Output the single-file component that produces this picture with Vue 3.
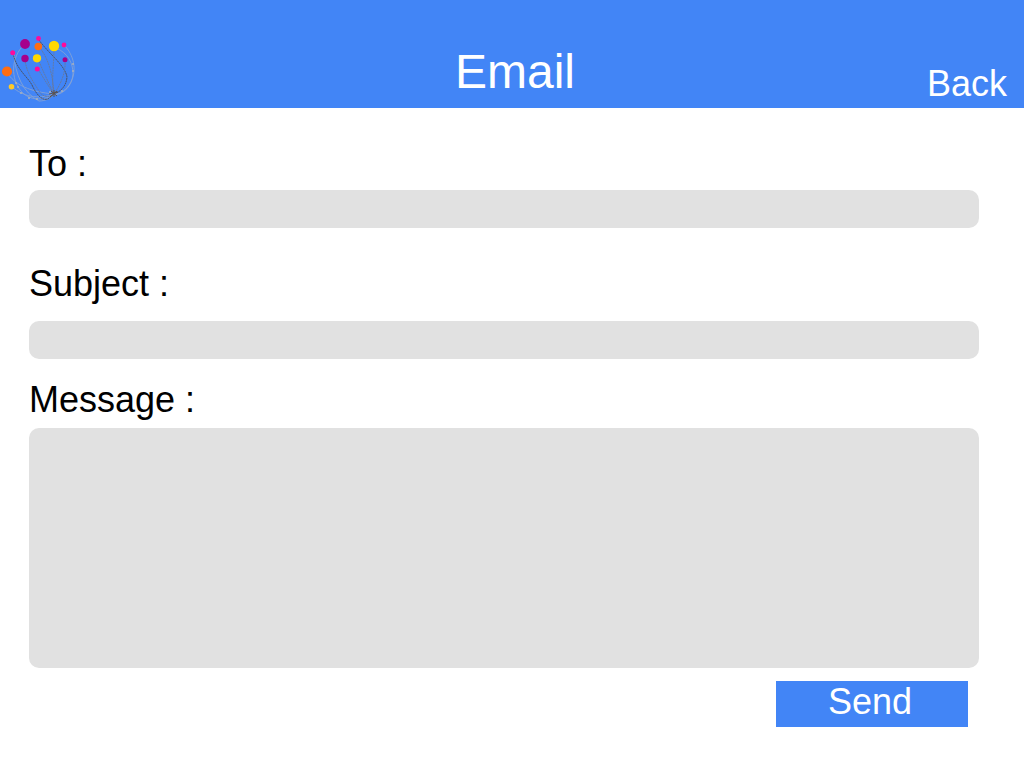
<script setup>
import { reactive } from 'vue'

const mail = reactive({ to: '', subject: '', message: '' })

const dots = [
  { x: 25, y: 44, r: 4.9, fill: '#a6008c' },
  { x: 38.5, y: 38.5, r: 2.4, fill: '#ff0a9c' },
  { x: 38.3, y: 46.5, r: 3.8, fill: '#ff6d12' },
  { x: 54, y: 46, r: 5.2, fill: '#ffd800' },
  { x: 64, y: 45, r: 2.4, fill: '#ff0a9c' },
  { x: 12.7, y: 52.8, r: 2.5, fill: '#ff0a9c' },
  { x: 25, y: 58.5, r: 3.7, fill: '#a6008c' },
  { x: 37, y: 58.3, r: 4.1, fill: '#ffd800' },
  { x: 65, y: 59.8, r: 2.5, fill: '#a6008c' },
  { x: 37.3, y: 69, r: 2.5, fill: '#ff0a9c' },
  { x: 7, y: 71.5, r: 5.1, fill: '#ff6d12' },
  { x: 11.5, y: 86.7, r: 2.8, fill: '#ffc928' },
]
</script>

<template>
  <div class="page">
    <header class="bar">
      <svg class="logo" viewBox="0 34 76 70" aria-hidden="true">
        <g class="thread light">
          <path d="M22 47C10 60 11 83 24 94C34 102 48 99 54 94" />
          <path d="M7 72C14 85 31 92 54 94" />
          <path d="M12 87C23 96 37 100 54 94" />
          <path d="M64 45C74 55 77 70 71 82C66 91 60 94 54 94" />
          <path d="M56 48C68 53 73 63 73 74C72 86 64 94 54 95" />
          <path d="M14 54C15 74 23 93 39 101C46 101 51 98 54 94" />
        </g>
        <g class="thread dark">
          <path d="M13 53C16 69 27 76 32 85C37 96 43 101 48 99L54 94" />
          <path d="M39 40C48 53 65 65 67 77C66 88 59 92 54 94" />
        </g>
        <g class="thread mid">
          <path d="M39 47C49 58 53 77 54 94" />
          <path d="M25 59C26 73 35 84 39 91C42 97 49 98 54 94" />
          <path d="M38 59C43 71 49 84 54 94" />
          <path d="M38 69C44 79 49 87 54 94" />
          <path d="M54 48C54 65 51 82 54 94" />
          <path d="M65 60C66 74 60 85 54 94" />
        </g>
        <path class="knot" d="M49 94L58 92M51 91L57 96M54 90V97M50 97L57 91" />
        <g class="beads">
          <circle cx="16" cy="83" r="1" />
          <circle cx="18" cy="87" r="1" />
          <circle cx="21" cy="93" r="1" />
          <circle cx="29" cy="98" r="1" />
          <circle cx="37" cy="99" r="1" />
          <circle cx="73" cy="64" r="1" />
          <circle cx="73" cy="71" r="1" />
          <circle cx="62" cy="91" r="1" />
          <circle cx="50" cy="92" r="1" />
        </g>
        <circle v-for="(d, i) in dots" :key="i" :cx="d.x" :cy="d.y" :r="d.r" :fill="d.fill" />
      </svg>
      <h1 class="title">Email</h1>
      <a class="back" href="#">Back</a>
    </header>

    <form class="form" @submit.prevent>
      <label class="label" for="to">To :</label>
      <input id="to" v-model="mail.to" class="field" type="email" />

      <label class="label subject" for="subject">Subject :</label>
      <input id="subject" v-model="mail.subject" class="field" type="text" />

      <label class="label message" for="message">Message :</label>
      <textarea id="message" v-model="mail.message" class="field area"></textarea>

      <button class="send" type="submit">Send</button>
    </form>
  </div>
</template>

<style>
body {
  margin: 0;
  background: #fff;
}
</style>

<style scoped>
.page {
  font-family: "Liberation Sans", Arial, sans-serif;
  font-size: 36px;
  line-height: 40px;
  color: #000;
}
.bar {
  display: grid;
  grid-template-columns: 1fr auto 1fr;
  align-items: end;
  box-sizing: border-box;
  min-height: 108px;
  padding-bottom: 4px;
  background: #4285f6;
  color: #fff;
}
.logo {
  display: block;
  width: 76px;
  height: 70px;
}
.thread {
  fill: none;
  stroke-width: 0.9;
}
.light {
  stroke: #93a9cf;
  opacity: 0.8;
}
.mid {
  stroke: #66789c;
  stroke-dasharray: 2 0.7;
}
.dark {
  stroke: #4b4e59;
  stroke-dasharray: 2 0.5;
}
.knot {
  fill: none;
  stroke: #59504d;
  stroke-width: 1;
}
.beads {
  fill: #a9b0bd;
}
.title {
  margin: 0;
  padding: 0 0 4px 6px;
  font-size: 48px;
  font-weight: 400;
  line-height: 56px;
}
.back {
  justify-self: end;
  padding-right: 17px;
  color: inherit;
  text-decoration: none;
}
.form {
  display: flex;
  flex-direction: column;
  padding: 36px 45px 40px 29px;
}
.label {
  align-self: flex-start;
  margin-bottom: 6px;
}
.subject {
  margin-top: 36px;
  margin-bottom: 17px;
}
.message {
  margin-top: 21px;
  margin-bottom: 8px;
}
.field {
  box-sizing: border-box;
  width: 100%;
  height: 38px;
  margin: 0;
  padding: 0 12px;
  border: 0;
  border-radius: 10px;
  background: #e1e1e1;
  color: inherit;
  font-family: inherit;
  font-size: 24px;
}
.area {
  height: 240px;
  padding: 12px;
  resize: none;
}
.send {
  align-self: flex-end;
  width: 192px;
  height: 46px;
  margin: 13px 11px 0 0;
  padding: 0 4px 4px 0;
  border: 0;
  background: #4285f6;
  color: #fff;
  font: inherit;
}
</style>
